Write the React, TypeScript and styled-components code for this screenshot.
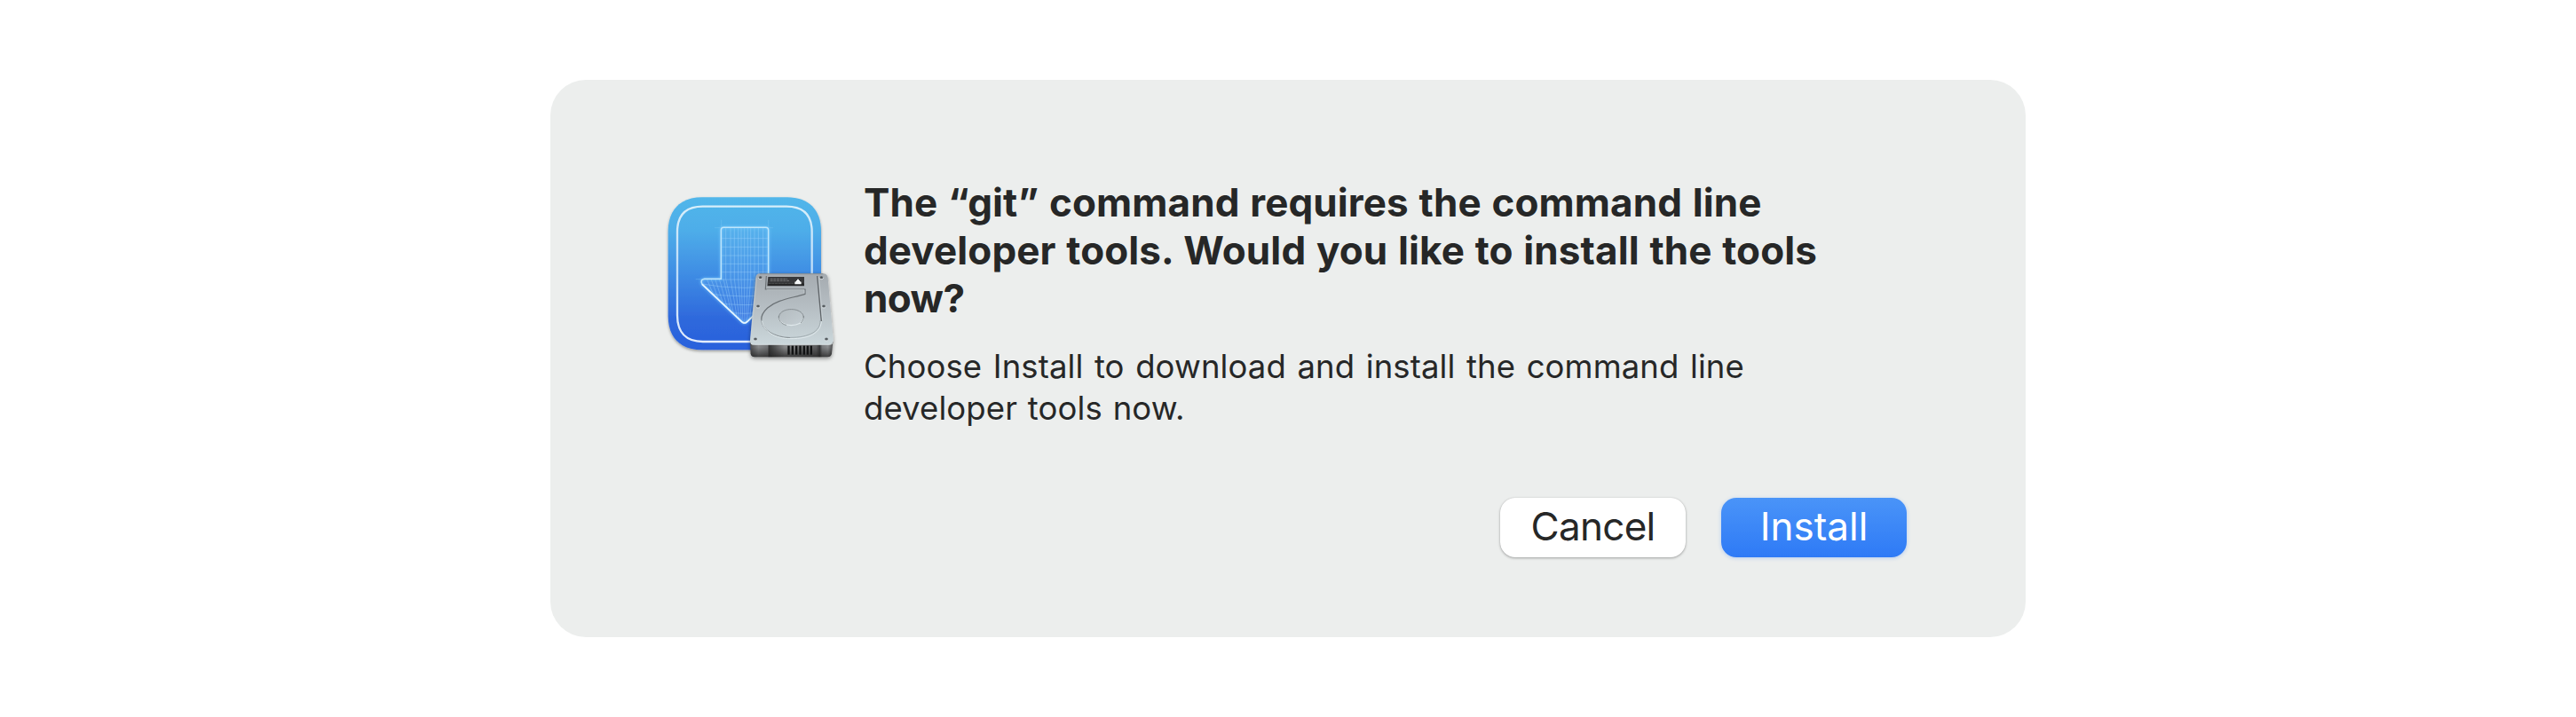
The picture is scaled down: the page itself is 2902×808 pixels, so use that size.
import React from "react";
import styled, { createGlobalStyle } from "styled-components";

const GlobalStyle = createGlobalStyle`
  * { box-sizing: border-box; }
  body { margin: 0; background: #fff; font-family: Inter, "Liberation Sans", sans-serif; color: #262727; }
`;

const Page = styled.main`
  display: flex;
  align-items: flex-start;
  height: 808px;
  padding: 90px 0 0 620px;
`;

const Dialog = styled.section`
  display: flex;
  flex-direction: column;
  justify-content: space-between;
  width: 1662px;
  height: 628px;
  padding: 115px 134px 90px 115px;
  border-radius: 40px;
  background: #eceeed;
`;

const Content = styled.div`
  display: flex;
  gap: 18px;
`;

const Icon = styled.svg`
  flex: none;
  width: 220px;
  height: 215px;
  overflow: visible;
`;

const Copy = styled.div`
  display: flex;
  flex-direction: column;
  gap: 27px;
  margin-top: -4px;
`;

const Line = styled.span<{ $tracking: number; $words?: number }>`
  display: block;
  white-space: nowrap;
  letter-spacing: ${(p) => p.$tracking}px;
  word-spacing: ${(p) => p.$words ?? 0}px;
`;

const Title = styled.h1`
  margin: 0;
  font-size: 44px;
  line-height: 54px;
  font-weight: 700;
`;

const Message = styled.p`
  margin: 0;
  font-size: 36.5px;
  line-height: 47px;
`;

const Actions = styled.div`
  display: flex;
  justify-content: flex-end;
  gap: 40px;
`;

const Button = styled.button<{ $primary?: boolean }>`
  width: 209px;
  height: 67px;
  padding: 0 0 4px;
  border: 0;
  border-radius: 17px;
  font: 400 44px/60px Inter, "Liberation Sans", sans-serif;
  letter-spacing: ${(p) => (p.$primary ? "0" : "-0.7px")};
  color: ${(p) => (p.$primary ? "#fff" : "#262727")};
  background: ${(p) => (p.$primary ? "linear-gradient(#4a94f8, #2e7af6)" : "#fff")};
  box-shadow: ${(p) =>
    p.$primary
      ? "0 1px 4px rgba(46,122,246,.3)"
      : "0 1px 3px rgba(0,0,0,.32), 0 0 1px rgba(0,0,0,.15)"};
`;

const ARROW =
  "M240 154H383Q392 154 392 163V328H448Q464 330 456 344L320 473Q311 481 302 473L168 346Q160 330 176 328H232V163Q232 154 240 154Z";
const SHAFT_COLUMNS = [248, 264, 277, 290, 300, 311, 322, 332, 345, 358, 374];
const SHAFT_ROWS = [191, 220, 249, 277, 305, 330];
const HEAD_ROWS = [358, 387, 416, 445];
const SCREWS = [
  [365, 323],
  [571, 323],
  [357, 420],
  [579, 420],
  [348, 531],
  [588, 531],
];
const VENTS = [457, 470, 483, 496, 509, 521, 533];

function InstallerIcon() {
  return (
    <Icon viewBox="0 0 660 645" fill="none" aria-hidden="true">
      <defs>
        <linearGradient id="tile" x1="0" y1="0" x2="0" y2="1">
          <stop offset="0" stopColor="#51b6ea" />
          <stop offset=".22" stopColor="#4eade9" />
          <stop offset=".5" stopColor="#3f8de4" />
          <stop offset=".8" stopColor="#2e68dc" />
          <stop offset="1" stopColor="#2a61dc" />
        </linearGradient>
        <linearGradient id="ring" x1="0" y1="0" x2="0" y2="1">
          <stop offset="0" stopColor="#d7eefa" />
          <stop offset=".5" stopColor="#bedcf8" />
          <stop offset="1" stopColor="#e4edfc" />
        </linearGradient>
        <linearGradient id="plate" x1="0" y1="0" x2="0" y2="1">
          <stop offset="0" stopColor="#a5abb0" />
          <stop offset=".45" stopColor="#b5bdc2" />
          <stop offset="1" stopColor="#cbd7db" />
        </linearGradient>
        <linearGradient id="front" x1="0" y1="0" x2="1" y2="0">
          <stop offset="0" stopColor="#4a4b4d" />
          <stop offset=".1" stopColor="#87898b" />
          <stop offset=".21" stopColor="#707274" />
          <stop offset=".23" stopColor="#343536" />
          <stop offset=".42" stopColor="#88898a" />
          <stop offset=".8" stopColor="#5b5c5d" />
          <stop offset=".84" stopColor="#343536" />
          <stop offset=".87" stopColor="#77797b" />
          <stop offset=".94" stopColor="#8b8d8f" />
          <stop offset="1" stopColor="#48494b" />
        </linearGradient>
        <linearGradient id="shade" x1="0" y1="0" x2="0" y2="1">
          <stop offset=".35" stopColor="#222" stopOpacity="0" />
          <stop offset="1" stopColor="#222" stopOpacity=".75" />
        </linearGradient>
        <linearGradient id="hub" x1="0" y1="0" x2="1" y2="1">
          <stop offset="0" stopColor="#b3bbbf" />
          <stop offset="1" stopColor="#c5ced3" />
        </linearGradient>
        <filter id="tileShadow" x="-20%" y="-20%" width="140%" height="140%">
          <feDropShadow dx="0" dy="5" stdDeviation="5" floodColor="#000" floodOpacity=".36" />
        </filter>
        <filter id="driveShadow" x="-20%" y="-20%" width="140%" height="140%">
          <feDropShadow dx="0" dy="5" stdDeviation="6" floodColor="#000" floodOpacity=".42" />
        </filter>
        <filter id="glow" x="-20%" y="-20%" width="140%" height="140%">
          <feGaussianBlur stdDeviation="4" />
        </filter>
        <clipPath id="arrowClip">
          <path d={ARROW} />
        </clipPath>
      </defs>

      <path
        filter="url(#tileShadow)"
        fill="url(#tile)"
        d="M168 52H455C528 52 570 94 570 167V453C570 526 528 568 455 568H168C95 568 53 526 53 453V167C53 94 95 52 168 52Z"
      />
      <path
        stroke="url(#ring)"
        strokeWidth="7"
        d="M170 83H453C510 83 539 112 539 169V451C539 508 510 540 453 540H170C113 540 84 508 84 451V169C84 112 113 83 170 83Z"
      />

      <path d={ARROW} fill="#78bdf8" fillOpacity=".2" />
      <g clipPath="url(#arrowClip)" stroke="#a8dcff" strokeWidth="2.5" strokeOpacity=".42">
        {SHAFT_COLUMNS.map((x) => (
          <path key={x} d={`M${x} 154V328L${311 + (x - 311) * 0.45} 481`} />
        ))}
        {SHAFT_ROWS.map((y) => (
          <path key={y} d={`M160 ${y}H464`} />
        ))}
        {HEAD_ROWS.map((y) => (
          <path key={y} d={`M160 ${y - 14}Q311 ${y + 14} 464 ${y - 14}`} />
        ))}
        {[184, 198, 212, 226, 240, 384, 398, 412, 426, 440].map((x) => (
          <path key={x} d={`M${x} 328L${311 + (x - 311) * 0.5} 481`} />
        ))}
      </g>
      <path d={ARROW} stroke="#79cbff" strokeWidth="9" strokeOpacity=".6" filter="url(#glow)" />
      <path d={ARROW} stroke="#bfe6fc" strokeWidth="4.5" />
      <path d="M168 346L302 473Q311 481 320 473L345 449" stroke="#e4f4ff" strokeWidth="5" />
      <path
        d="M233 128V154M392 128V154M210 155H233M392 155H408M146 329H172"
        stroke="#7fcbf3"
        strokeWidth="2"
        strokeOpacity=".55"
      />

      <g filter="url(#driveShadow)">
        <path d="M330 540H610L606 580Q604 592 592 592H346Q333 592 332 580Z" fill="url(#front)" />
        <path d="M330 540H610L606 580Q604 592 592 592H346Q333 592 332 580Z" fill="url(#shade)" />
        <path
          d="M363 310H577Q591 310 593 324L611 534Q611 550 597 550H343Q329 550 330 536L349 324Q350 310 363 310Z"
          fill="url(#plate)"
        />
      </g>
      <path d="M333 547Q337 550 343 550H597Q606 550 609 545" stroke="#e0e7e9" strokeWidth="2.5" />
      <path d="M363 311H577" stroke="#81878b" strokeWidth="2.5" />
      <path d="M352 325L333 532" stroke="#ced5d8" strokeWidth="2" strokeOpacity=".7" />
      {VENTS.map((x) => (
        <rect key={x} x={x} y="554" width="7" height="30" fill="#111213" />
      ))}
      <path d="M385 318L382 363H516V379C466 394 421 398 389 426C374 440 367 453 368 467" stroke="#6b7175" strokeWidth="3.5" />
      <path d="M368 464C369 498 408 526 466 527" stroke="#8c9498" strokeWidth="3.5" />
      <path d="M371 470C373 502 412 530 468 530C529 530 571 511 571 468" stroke="#e2ebee" strokeWidth="3" />
      <path d="M466 526C528 526 568 506 567 469" stroke="#909a9e" strokeWidth="2" />
      <path d="M571 471L557 318" stroke="#606569" strokeWidth="4" />
      <path d="M575 468L562 320" stroke="#d2dadd" strokeWidth="2" />
      <path d="M386 365H513V376" stroke="#d3dbde" strokeWidth="2" strokeOpacity=".8" />
      <ellipse cx="469" cy="457" rx="42" ry="27" fill="url(#hub)" />
      <path d="M427 460C426 421 512 421 511 460" stroke="#878e92" strokeWidth="3" />
      <path d="M427 460C431 493 508 493 511 460" stroke="#e0e9ec" strokeWidth="3.5" />
      <path d="M427 453C425 475 445 483 453 484M511 453C512 464 507 472 501 477" stroke="#7d8488" strokeWidth="2.5" />
      <path d="M391 321H513V352H388Z" fill="#38393b" />
      <path d="M392 344H490M398 328H456M398 334H462" stroke="#77797a" strokeWidth="3" strokeDasharray="9 2" />
      <path d="M391 347H513" stroke="#252627" strokeWidth="7" />
      <path d="M481 346V338L486 336V333H489V329H495V333H498V336L503 338V346Z" fill="#f4f6f7" />
      {SCREWS.map(([cx, cy]) => (
        <g key={`${cx}-${cy}`}>
          <ellipse cx={cx} cy={cy + 2} rx="7" ry="5.5" fill="#d9e0e3" />
          <ellipse cx={cx} cy={cy} rx="6" ry="4.8" fill="#6a7074" />
          <ellipse cx={cx} cy={cy} rx="3" ry="2.5" fill="#484d51" />
        </g>
      ))}
    </Icon>
  );
}

export default function App() {
  return (
    <>
      <GlobalStyle />
      <Page>
        <Dialog role="alertdialog">
          <Content>
            <InstallerIcon />
            <Copy>
              <Title>
                <Line $tracking={0.1} $words={1.2}>The “git” command requires the command line</Line>
                <Line $tracking={0.1} $words={1.2}>developer tools. Would you like to install the tools</Line>
                <Line $tracking={-0.6}>now?</Line>
              </Title>
              <Message>
                <Line $tracking={0.1} $words={2.2}>Choose Install to download and install the command line</Line>
                <Line $tracking={0.1} $words={1.5}>developer tools now.</Line>
              </Message>
            </Copy>
          </Content>
          <Actions>
            <Button>Cancel</Button>
            <Button $primary>Install</Button>
          </Actions>
        </Dialog>
      </Page>
    </>
  );
}
